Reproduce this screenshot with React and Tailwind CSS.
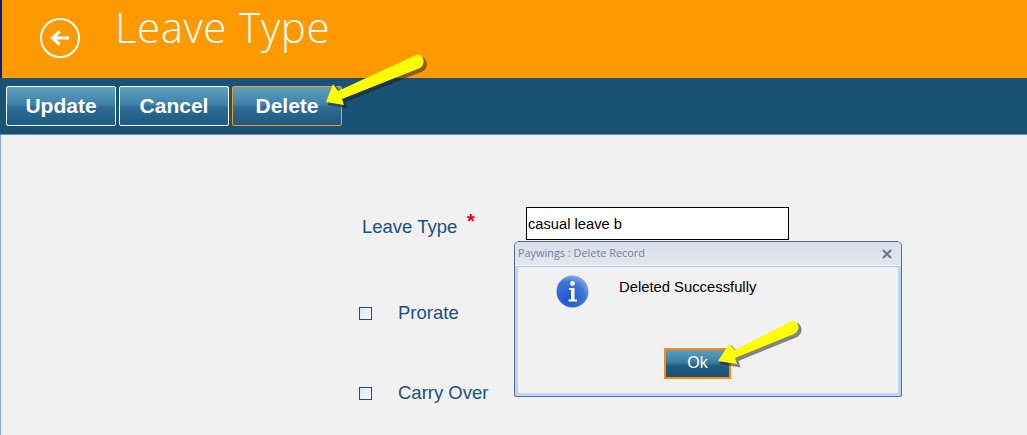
const Arrow = ({ className, w, h, d }) => (
  <svg className={className} width={w} height={h} viewBox={`0 0 ${w} ${h}`} fill="none">
    <path d={d} transform="translate(2.5 2.5)" fill="#1a1a1a" opacity="0.5" stroke="#1a1a1a" strokeWidth="1.5" />
    <path d={d} fill="#ffff00" />
  </svg>
);

const ToolBtn = ({ children, active }) => (
  <button className={`w-[110px] h-10 pb-[2px] rounded-[2px] border text-white text-[21px] font-bold leading-none bg-[linear-gradient(#5da2c2_0%,#3d7fa5_48%,#2f6d96_52%,#1e5a82_100%)] ${active ? "border-[#ff9a1a]" : "border-white"}`}>
    {children}
  </button>
);

const Check = () => (
  <span className="w-[13px] h-[13px] shrink-0 border border-[#1a5080] bg-[linear-gradient(135deg,#dfe6f2,#f6f8fb)]" />
);

export default function App() {
  return (
    <div className="relative w-[1027px] h-[435px] overflow-hidden bg-[#f1f1f1] font-['Liberation_Sans',Arial,sans-serif]">
      <header className="h-[78px] bg-[#ff9900] border-l-2 border-[#0a1f8a] flex items-start">
        <svg className="ml-[37px] mt-[17px]" width="42" height="42" viewBox="0 0 42 42" fill="none">
          <circle cx="21" cy="21" r="19" stroke="white" strokeWidth="2" />
          <path d="M30 21H14M20.5 14.5 13.5 21l7 6.5" stroke="white" strokeWidth="3.2" />
        </svg>
        <h1 className="ml-[34px] text-white text-[42px] leading-[53px] font-light font-['Open_Sans',sans-serif] tracking-[0.55px]">Leave Type</h1>
      </header>
      <div className="h-[57px] bg-[#1a5276] border-b border-[#6d93bb] pl-1.5 pt-2 flex items-start gap-[3px]">
        <ToolBtn>Update</ToolBtn>
        <ToolBtn>Cancel</ToolBtn>
        <ToolBtn active>Delete</ToolBtn>
      </div>
      <main className="h-[300px] border-l border-[#8fa8cc] pl-[358px] pt-[72px]">
        <div className="h-[33px] flex items-center">
          <span className="ml-[3px] w-[105px] text-[18.5px] leading-[22px] text-[#1a5080] relative top-[3px]">Leave Type</span>
          <span className="w-[59px] h-[33px] pt-[4px] text-[20px] leading-[20px] text-[#f00000] font-bold">*</span>
          <div className="w-[263px] h-[33px] shrink-0 border border-black bg-white pl-px text-[14.7px] leading-[32px] text-black">casual leave b</div>
        </div>
        <div className="mt-[63px] h-5 flex items-center gap-[26px] text-[18.5px] text-[#1a5080]">
          <Check />
          <span>Prorate</span>
        </div>
        <div className="mt-[60px] h-5 flex items-center gap-[26px] text-[18.5px] text-[#1a5080]">
          <Check />
          <span>Carry Over</span>
        </div>
      </main>

      <div className="absolute left-[514px] top-[241px] w-[388px] h-[156px] rounded-t-[5px] rounded-b-[2px] border border-[#5a6a8c] bg-[#b9d4fb] flex flex-col">
        <div className="h-[24px] rounded-t-[4px] bg-[linear-gradient(#d8dfe9,#e3e7ee)] border-b border-white px-[3px] flex items-center justify-between text-[10.9px] text-[#6d7fa0] font-['Open_Sans',sans-serif]">
          <span>Paywings : Delete Record</span>
          <svg className="mr-[6px]" width="10" height="10" viewBox="0 0 10 10"><path d="M1 1l8 8M9 1 1 9" stroke="#6a7486" strokeWidth="2" /></svg>
        </div>
        <div className="flex-1 mx-[3px] mb-[3px] border-t border-[#a3c6f2] bg-[#f1f1f1] relative">
          <div className="flex items-start">
            <svg className="ml-[38px] mt-[8px]" width="33" height="33" viewBox="0 0 33 33">
              <defs>
                <radialGradient id="i" cx="0.35" cy="0.75" r="0.9">
                  <stop offset="0" stopColor="#1f55d0" />
                  <stop offset="0.6" stopColor="#3f74d6" />
                  <stop offset="1" stopColor="#a9c4ec" />
                </radialGradient>
              </defs>
              <circle cx="16.5" cy="16.5" r="16" fill="url(#i)" />
              <circle cx="16.5" cy="8.5" r="2.4" fill="white" />
              <path d="M13 13h5.5v11.5h2.5V26.5h-8.5v-2H15V15h-2Z" fill="white" />
            </svg>
            <span className="ml-[30px] mt-[12px] text-[14.8px] leading-4 text-black">Deleted Successfully</span>
          </div>
          <button className="absolute left-[146px] top-[81px] w-[67px] h-[31px] pb-px border-2 border-[#ff8c00] text-white text-[16px] bg-[linear-gradient(#5a9fbd_0%,#3c7fa3_45%,#1f5a82_60%,#1b5178_100%)]">Ok</button>
        </div>
      </div>

      <Arrow className="absolute left-[320px] top-[50px]" w="112" h="60"
        d="M6 52 L13 34 L18 41 L96 5 C100 4 103 7 103.5 10 C104 14 102 17 100 18 L22 49 L24 55 Z" />
      <Arrow className="absolute left-[712px] top-[318px]" w="92" h="50"
        d="M6 43 L17 26 L23 32 L80 3 C83 2 86 5 86.5 9 C86.5 12 84 15 82 16 L23 40 L25 46 Z" />
    </div>
  );
}
